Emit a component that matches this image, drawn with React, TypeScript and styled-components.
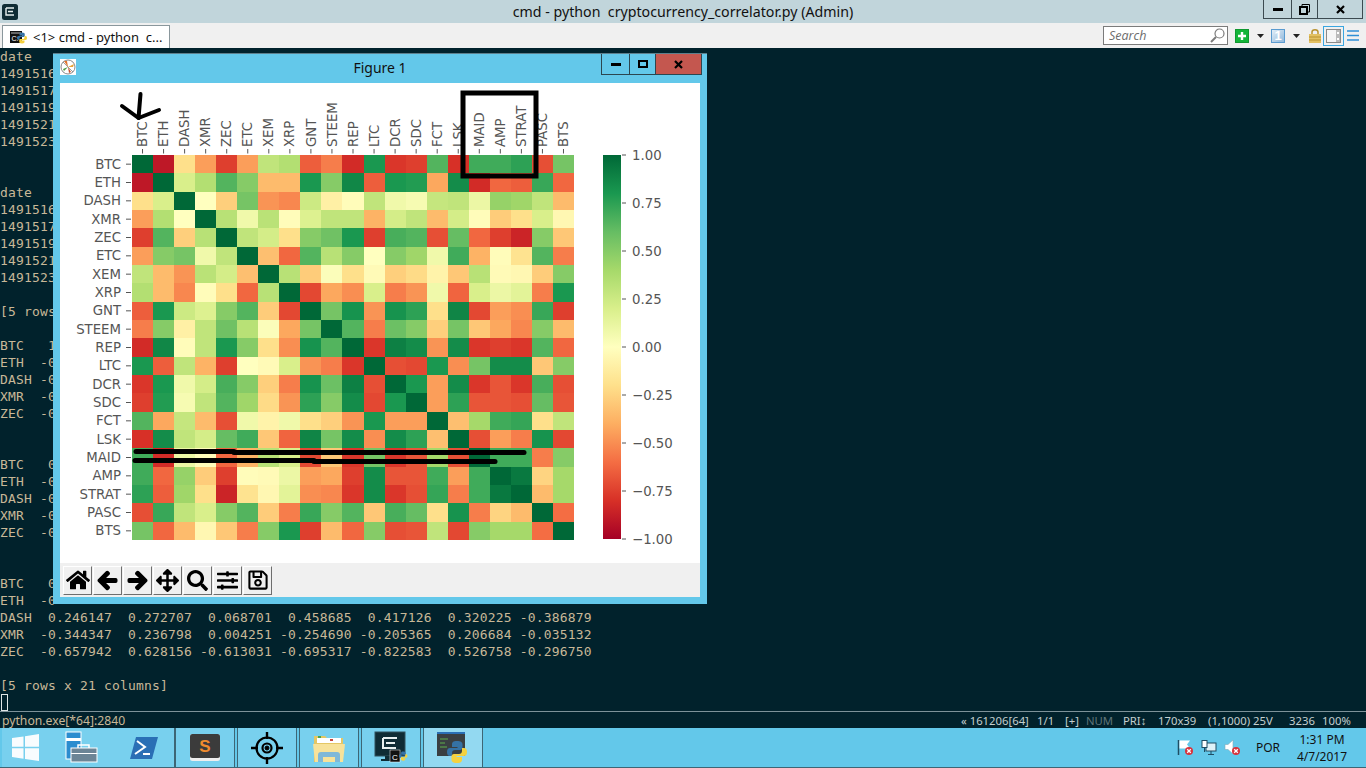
import { ReactElement } from "react";
import styled, { createGlobalStyle } from "styled-components";
import {
  FaArrowLeft,
  FaArrowRight,
  FaArrowsAlt,
  FaHome,
  FaRegSave,
  FaSearch,
  FaSlidersH,
} from "react-icons/fa";

const GlobalStyle = createGlobalStyle`
  html, body {
    margin: 0;
    padding: 0;
    background: #01222c;
  }
`;

const Page = styled.div`
  display: flex;
  flex-direction: column;
  font-family: "Noto Sans", sans-serif;
  height: 768px;
  overflow: hidden;
  position: relative;
  width: 1366px;
`;

const TitleBar = styled.div`
  align-items: flex-start;
  background: #c1d5db;
  display: grid;
  flex: none;
  grid-template-columns: 1fr auto 1fr;
  height: 23px;
`;

const AppIconSlot = styled.div`
  padding: 3px 0 0 2px;
`;

const TitleText = styled.div`
  color: #111;
  font-size: 14.2px;
  line-height: 23px;
  white-space: pre;
`;

const TitleButtons = styled.div`
  display: flex;
  justify-content: flex-end;
  padding-right: 3px;
`;

const TitleButton = styled.div<{ $w: number }>`
  align-items: center;
  border-bottom: 1px solid #3c4a50;
  border-left: 1px solid #3c4a50;
  box-sizing: border-box;
  display: flex;
  height: 19px;
  justify-content: center;
  width: ${p => p.$w}px;

  &:last-child {
    border-right: 1px solid #3c4a50;
  }
`;

const TabBar = styled.div`
  align-items: flex-end;
  background: #f0f0f0;
  display: flex;
  flex: none;
  height: 25px;
  justify-content: space-between;
  padding: 0 4px 0 2px;
  box-sizing: border-box;
`;

const Tab = styled.div`
  align-items: center;
  background: #fff;
  border: 1px solid #8a979c;
  border-bottom: none;
  box-sizing: border-box;
  color: #111;
  display: flex;
  font-size: 13px;
  gap: 6px;
  height: 23px;
  padding-left: 7px;
  white-space: pre;
  width: 168px;
`;

const Tools = styled.div`
  align-items: center;
  align-self: stretch;
  display: flex;
`;

const SearchBox = styled.div`
  align-items: center;
  background: #fff;
  border: 1px solid #7b7b7b;
  box-sizing: border-box;
  color: #6c6c6c;
  display: flex;
  font-family: "Open Sans", sans-serif;
  font-size: 12.5px;
  font-style: italic;
  height: 19px;
  justify-content: space-between;
  margin-right: 6px;
  padding: 0 2px 0 5px;
  width: 125px;
`;

const ToolSlot = styled.div<{ $w: number; $active?: boolean }>`
  align-items: center;
  border: ${p => (p.$active ? "1px solid #3aa6e0" : "none")};
  box-sizing: border-box;
  display: flex;
  height: ${p => (p.$active ? "20px" : "18px")};
  justify-content: center;
  width: ${p => p.$w}px;
`;

const NumberTile = styled.div`
  align-items: center;
  background: linear-gradient(135deg, #e2eef7, #8fb8dc);
  border: 1px solid #5a9bd0;
  box-sizing: border-box;
  color: #fff;
  display: flex;
  font-family: "Liberation Sans", sans-serif;
  font-size: 13px;
  font-weight: 700;
  height: 14px;
  justify-content: center;
  width: 14px;
`;

const Terminal = styled.div`
  background: #01222c;
  color: #c8b898;
  flex: none;
  font-family: "DejaVu Sans Mono", monospace;
  font-size: 13px;
  height: 663px;
  letter-spacing: 0.17px;
  line-height: 17px;
`;

const TerminalRow = styled.div`
  height: 17px;
  white-space: pre;
`;

const Cursor = styled.span`
  border: 1px solid #dfe6e6;
  box-sizing: border-box;
  display: inline-block;
  height: 17px;
  margin-left: 1px;
  width: 7px;
`;

const StatusBar = styled.div`
  align-items: center;
  background: #01222c;
  border-top: 1px solid #7d9299;
  box-sizing: border-box;
  color: #c8b898;
  display: flex;
  flex: none;
  font-size: 12.2px;
  height: 17px;
  justify-content: space-between;
  padding: 0 1px 0 2px;
`;

const StatusRight = styled.div`
  display: flex;
`;

const StatusItem = styled.span<{ $w: number; $dim?: boolean }>`
  color: ${p => (p.$dim ? "#5f7478" : "#c3cfcf")};
  font-size: 11.3px;
  white-space: nowrap;
  width: ${p => p.$w}px;
`;

const Taskbar = styled.div`
  align-items: stretch;
  background: #63c8ea;
  border-bottom: 1px solid #3d6675;
  box-sizing: border-box;
  display: flex;
  flex: none;
  height: 40px;
  padding-left: 2px;
`;

const QuickLaunch = styled.div`
  align-items: center;
  background: #78d0ee;
  border-right: 1px solid #3d6675;
  display: flex;
  width: 172px;
`;

const TaskSlot = styled.div<{ $w: number }>`
  align-items: center;
  display: flex;
  flex: none;
  justify-content: center;
  width: ${p => p.$w}px;
`;

const TaskButton = styled.div<{ $active?: boolean }>`
  align-items: center;
  background: ${p => (p.$active ? "#93d9f1" : "#78d0ee")};
  border-left: 1px solid #3d6675;
  border-right: 1px solid #3d6675;
  box-sizing: border-box;
  display: flex;
  justify-content: center;
  margin-right: 2px;
  width: 60px;
`;

const Tray = styled.div`
  align-items: center;
  display: flex;
  flex: 1;
  justify-content: flex-end;
  padding-right: 10px;
`;

const TrayIcon = styled.div`
  display: flex;
  margin-right: 7px;
`;

const TrayLang = styled.div`
  color: #111;
  font-size: 12px;
  margin: 0 8px 0 8px;
`;

const Clock = styled.div`
  color: #111;
  font-size: 12px;
  line-height: 17px;
  text-align: center;
  width: 68px;
`;

const FigureWindow = styled.div`
  background: #63c8ea;
  border-top: 1px solid #5e7f8c;
  box-sizing: border-box;
  display: flex;
  flex-direction: column;
  height: 551px;
  left: 53px;
  padding: 0 7px 7px;
  position: absolute;
  top: 53px;
  width: 654px;
`;

const WindowHeader = styled.div`
  display: grid;
  flex: none;
  grid-template-columns: 1fr auto 1fr;
  height: 29px;
`;

const WindowIconSlot = styled.div`
  padding-top: 4px;
`;

const WindowTitle = styled.div`
  color: #111;
  font-size: 14px;
  line-height: 27px;
`;

const WindowButtons = styled.div`
  display: flex;
  justify-content: flex-end;
  margin-right: -2px;
`;

const WindowButton = styled.div<{ $w: number; $close?: boolean }>`
  align-items: center;
  background: ${p => (p.$close ? "#c4574f" : "transparent")};
  border: 1px solid #2c4650;
  border-top: none;
  box-sizing: border-box;
  display: flex;
  height: 21px;
  justify-content: center;
  margin-left: -1px;
  width: ${p => p.$w}px;
`;

const FigureCanvas = styled.div`
  background: #fff;
  flex: none;
  height: 480px;
  line-height: 0;
`;

const FigureToolbar = styled.div`
  align-items: center;
  background: #f0f0f0;
  display: flex;
  flex: 1;
  gap: 1px;
  padding-left: 3px;
`;

const ToolbarButton = styled.div<{ $heavy?: boolean }>`
  align-items: center;
  background: #f0f0f0;
  border-bottom: 1px solid #6e6e6e;
  border-left: 1px solid #fff;
  border-right: 1px solid #6e6e6e;
  border-top: 1px solid #fff;
  box-sizing: border-box;
  color: #000;
  display: flex;
  height: 29px;
  justify-content: center;
  width: 29px;

  svg {
    stroke-width: ${p => (p.$heavy ? "40px" : "0")};
  }
`;

const labels = [
  "BTC", "ETH", "DASH", "XMR", "ZEC", "ETC", "XEM", "XRP", "GNT", "STEEM", "REP",
  "LTC", "DCR", "SDC", "FCT", "LSK", "MAID", "AMP", "STRAT", "PASC", "BTS",
];

const matrix = [
  [1, -0.9, -0.2, -0.45, -0.75, -0.45, 0.3, 0.35, -0.65, -0.55, -0.82, 0.8, -0.78, -0.75, 0.65, -0.8, 0.7, 0.7, 0.75, -0.7, 0.55],
  [-0.9, 1, 0.2, 0.35, 0.65, 0.5, -0.35, -0.35, 0.8, 0.5, 0.87, -0.65, 0.8, 0.78, -0.42, 0.85, -0.82, -0.62, -0.65, 0.72, -0.62],
  [-0.2, 0.2, 1, 0, -0.27, 0.55, -0.48, -0.52, 0.25, -0.1, -0.02, 0.3, 0.08, 0.05, 0.28, 0.3, 0.1, 0.45, 0.42, 0.3, -0.35],
  [-0.45, 0.35, 0, 1, 0.33, 0.08, 0.32, -0.02, 0.18, 0.3, 0.3, -0.38, 0.22, 0.3, -0.35, 0.22, -0.02, -0.28, -0.2, 0.2, -0.05],
  [-0.75, 0.65, -0.27, 0.33, 1, 0.3, 0.22, -0.2, 0.5, 0.57, 0.8, -0.75, 0.68, 0.65, -0.7, 0.6, -0.62, -0.75, -0.85, 0.5, -0.3],
  [-0.45, 0.5, 0.55, 0.08, 0.3, 1, -0.33, -0.62, 0.65, 0.33, 0.5, 0, 0.5, 0.42, 0.08, 0.7, -0.38, -0.02, -0.18, 0.65, -0.55],
  [0.3, -0.35, -0.48, 0.32, 0.22, -0.33, 1, 0.33, -0.28, 0.02, -0.2, -0.03, -0.27, -0.22, -0.08, -0.3, 0.33, -0.03, -0.05, -0.28, 0.5],
  [0.35, -0.35, -0.52, -0.02, -0.2, -0.62, 0.33, 1, -0.72, -0.42, -0.5, 0.2, -0.55, -0.48, 0.08, -0.63, 0.2, 0.1, 0.15, -0.55, 0.8],
  [-0.65, 0.8, 0.25, 0.18, 0.5, 0.65, -0.28, -0.72, 1, 0.55, 0.82, -0.48, 0.82, 0.75, -0.2, 0.88, -0.72, -0.45, -0.5, 0.72, -0.75],
  [-0.55, 0.5, -0.1, 0.3, 0.57, 0.33, 0.02, -0.42, 0.55, 1, 0.65, -0.55, 0.58, 0.5, -0.27, 0.55, -0.3, -0.42, -0.52, 0.5, -0.35],
  [-0.82, 0.87, -0.02, 0.3, 0.8, 0.5, -0.2, -0.5, 0.82, 0.65, 1, -0.78, 0.9, 0.85, -0.48, 0.85, -0.78, -0.75, -0.78, 0.65, -0.62],
  [0.8, -0.65, 0.3, -0.38, -0.75, 0, -0.03, 0.2, -0.48, -0.55, -0.78, 1, -0.7, -0.72, 0.8, -0.5, 0.55, 0.85, 0.85, -0.3, 0.5],
  [-0.78, 0.8, 0.08, 0.22, 0.68, 0.5, -0.27, -0.55, 0.82, 0.58, 0.9, -0.7, 1, 0.8, -0.45, 0.85, -0.78, -0.68, -0.78, 0.68, -0.7],
  [-0.75, 0.78, 0.05, 0.3, 0.65, 0.42, -0.22, -0.48, 0.75, 0.5, 0.85, -0.72, 0.8, 1, -0.45, 0.75, -0.68, -0.68, -0.7, 0.6, -0.68],
  [0.65, -0.42, 0.28, -0.35, -0.7, 0.08, -0.08, 0.08, -0.2, -0.27, -0.48, 0.8, -0.45, -0.45, 1, -0.33, 0.4, 0.7, 0.73, -0.2, 0.3],
  [-0.8, 0.85, 0.3, 0.22, 0.6, 0.7, -0.3, -0.63, 0.88, 0.55, 0.85, -0.5, 0.85, 0.75, -0.33, 1, -0.7, -0.45, -0.55, 0.82, -0.72],
  [0.7, -0.82, 0.1, -0.02, -0.62, -0.38, 0.33, 0.2, -0.72, -0.3, -0.78, 0.55, -0.78, -0.68, 0.4, -0.7, 1, 0.7, 0.7, -0.55, 0.5],
  [0.7, -0.62, 0.45, -0.28, -0.75, -0.02, -0.03, 0.1, -0.45, -0.42, -0.75, 0.85, -0.68, -0.68, 0.7, -0.45, 0.7, 1, 0.93, -0.25, 0.4],
  [0.75, -0.65, 0.42, -0.2, -0.85, -0.18, -0.05, 0.15, -0.5, -0.52, -0.78, 0.85, -0.78, -0.7, 0.73, -0.55, 0.7, 0.93, 1, -0.35, 0.4],
  [-0.7, 0.72, 0.3, 0.2, 0.5, 0.65, -0.28, -0.55, 0.72, 0.5, 0.65, -0.3, 0.68, 0.6, -0.2, 0.82, -0.55, -0.25, -0.35, 1, -0.6],
  [0.55, -0.62, -0.35, -0.05, -0.3, -0.55, 0.5, 0.8, -0.75, -0.35, -0.62, 0.5, -0.7, -0.68, 0.3, -0.72, 0.5, 0.4, 0.4, -0.6, 1],
];

const cmapStops = [
  [165, 0, 38], [215, 48, 39], [244, 109, 67], [253, 174, 97], [254, 224, 139], [255, 255, 191],
  [217, 239, 139], [166, 217, 106], [102, 189, 99], [26, 152, 80], [0, 104, 55],
];

// RdYlGn, same thing seaborn draws with
function cmap(v: number): string {
  const t = ((v + 1) / 2) * 10;
  const i = Math.min(9, Math.floor(t));
  const f = t - i;
  const c = cmapStops[i].map((a, k) => Math.round(a + (cmapStops[i + 1][k] - a) * f));
  return `rgb(${c[0]},${c[1]},${c[2]})`;
}

const terminalRows = [
  "date", "1491516", "1491517", "1491519", "1491521", "1491523", "", "",
  "date", "1491516", "1491517", "1491519", "1491521", "1491523", "",
  "[5 rows", "",
  "BTC   1", "ETH  -0", "DASH -0", "XMR  -0", "ZEC  -0", "", "",
  "BTC   0", "ETH  -0", "DASH -0", "XMR  -0", "ZEC  -0", "", "",
  "BTC   0", "ETH  -0",
  "DASH  0.246147  0.272707  0.068701  0.458685  0.417126  0.320225 -0.386879",
  "XMR  -0.344347  0.236798  0.004251 -0.254690 -0.205365  0.206684 -0.035132",
  "ZEC  -0.657942  0.628156 -0.613031 -0.695317 -0.822583  0.526758 -0.296750",
  "",
  "[5 rows x 21 columns]",
];

const statusItems: { text: string; w: number; dim?: boolean }[] = [
  { text: "« 161206[64]", w: 76 },
  { text: "1/1", w: 28 },
  { text: "[+]", w: 21 },
  { text: "NUM", w: 37, dim: true },
  { text: "PRI↕", w: 35 },
  { text: "170x39", w: 50 },
  { text: "(1,1000) 25V", w: 81 },
  { text: "3236", w: 33 },
  { text: "100%", w: 43 },
];

// chart geometry, in canvas pixels (640x480 matplotlib figure)
const HEAT_X = 72;
const HEAT_Y = 72;
const CELL_W = 442 / 21;
const CELL_H = 385 / 21;
const BAR_Y = 72;
const BAR_H = 384;

const colorTicks = ["1.00", "0.75", "0.50", "0.25", "0.00", "−0.25", "−0.50", "−0.75", "−1.00"];

function HeatmapChart(): ReactElement {
  return (
    <svg width="640" height="480" viewBox="0 0 640 480" fontFamily="'DejaVu Sans', sans-serif" fontSize="13.3" fill="#555">
      <defs>
        <linearGradient id="bar" x1="0" y1="1" x2="0" y2="0">
          {cmapStops.map((c, i) => (
            <stop key={i} offset={i / 10} stopColor={`rgb(${c[0]},${c[1]},${c[2]})`} />
          ))}
        </linearGradient>
      </defs>

      <g shapeRendering="crispEdges">
        {matrix.map((row, r) =>
          row.map((v, c) => (
            <rect
              key={`${r}-${c}`}
              x={Math.round(HEAT_X + c * CELL_W)}
              y={Math.round(HEAT_Y + r * CELL_H)}
              width={Math.round(HEAT_X + (c + 1) * CELL_W) - Math.round(HEAT_X + c * CELL_W)}
              height={Math.round(HEAT_Y + (r + 1) * CELL_H) - Math.round(HEAT_Y + r * CELL_H)}
              fill={cmap(v)}
            />
          )),
        )}
      </g>

      {labels.map((l, i) => {
        const x = HEAT_X + (i + 0.5) * CELL_W;
        const y = HEAT_Y + (i + 0.5) * CELL_H;
        return (
          <g key={l}>
            <line x1={x} x2={x} y1={66} y2={70.5} stroke="#555" />
            <text transform={`translate(${x + 4.6} 64) rotate(-90)`}>{l}</text>
            <line x1={66} x2={71} y1={y} y2={y} stroke="#555" />
            <text x={61} y={y + 4.6} textAnchor="end">{l}</text>
          </g>
        );
      })}

      <rect x={543} y={BAR_Y} width={18} height={BAR_H} fill="url(#bar)" />
      {colorTicks.map((t, i) => {
        const y = BAR_Y + (i * BAR_H) / 8;
        return (
          <g key={t}>
            <line x1={562} x2={566} y1={y} y2={y} stroke="#555" />
            <text x={572} y={y + 4.6}>{t}</text>
          </g>
        );
      })}

      {/* hand drawn marks on top of the plot */}
      <g fill="none" stroke="#000" strokeLinecap="round" strokeLinejoin="round">
        <g strokeWidth="4">
          <path d="M80.5 11 L78.5 35" />
          <path d="M62 23 L78.5 35 L99 27" />
        </g>
        <g strokeWidth="5">
          <path d="M76 368.500 H174" />
          <path d="M174 369.500 H464" />
          <path d="M75 377.500 H254" />
          <path d="M254 378.500 H435" />
        </g>
      </g>
      <rect x={403} y={10} width={73} height={83} fill="none" stroke="#000" strokeWidth="5" />
    </svg>
  );
}

function EmuIcon({ size }: { size: number }): ReactElement {
  return (
    <svg width={size} height={size} viewBox="0 0 16 16">
      <rect x="0" y="0" width="16" height="16" rx="2.500" fill="#0f2c35" />
      <path d="M4 4 H12 M4 4 V11 H12 M6 7.500 H11" stroke="#e8f0f0" strokeWidth="1.400" fill="none" />
    </svg>
  );
}

function PythonMark({ x, y, s }: { x: number; y: number; s: number }): ReactElement {
  return (
    <g transform={`translate(${x} ${y}) scale(${s})`}>
      <path d="M10 1 C6 1 5 2.500 5 4.500 V7 H10.500 V8 H3 C1 8 0 9.500 0 12 C0 14.500 1 16 3 16 H5 V13 C5 11.300 6.300 10 8 10 H13 C14.500 10 15.500 9 15.500 7.500 V4.500 C15.500 2.500 14 1 10 1 Z" fill="#3572a5" />
      <path d="M10 23 C14 23 15 21.500 15 19.500 V17 H9.500 V16 H17 C19 16 20 14.500 20 12 C20 9.500 19 8 17 8 H15 V11 C15 12.700 13.700 14 12 14 H7 C5.500 14 4.500 15 4.500 16.500 V19.500 C4.500 21.500 6 23 10 23 Z" fill="#f5d13f" />
    </g>
  );
}

function TabConsoleIcon(): ReactElement {
  return (
    <svg width="17" height="16" viewBox="0 0 17 16">
      <rect x="0" y="2" width="12" height="12" fill="#111" />
      <rect x="1" y="3" width="10" height="2" fill="#666" />
      <text x="1.500" y="12" fontSize="7" fill="#fff" fontFamily="'Liberation Sans', sans-serif">C:</text>
      <PythonMark x={7} y={3} s={0.5} />
    </svg>
  );
}

function FigureIcon(): ReactElement {
  return (
    <svg width="16" height="16" viewBox="0 0 16 16">
      <rect width="16" height="16" fill="#fff" />
      <circle cx="8" cy="8" r="7" fill="none" stroke="#888" />
      <path d="M8 8 L4 2 L7 2 Z" fill="#e2732a" />
      <path d="M8 8 L14 5 L13 8 Z" fill="#e8a33a" />
      <path d="M8 8 L3 10 L4 12 Z" fill="#4c9a3f" />
      <path d="M8 8 L11 13 L9 14 Z" fill="#c9502a" />
      <path d="M3 3 L13 13" stroke="#777" strokeWidth="0.700" />
    </svg>
  );
}

function WindowsLogo(): ReactElement {
  return (
    <svg width="27" height="27" viewBox="0 0 27 27" fill="#fff" opacity="0.95">
      <path d="M0 4 L11.500 2.400 V12.800 H0 Z" />
      <path d="M13 2.200 L27 0 V12.800 H13 Z" />
      <path d="M0 14.200 H11.500 V24.800 L0 23 Z" />
      <path d="M13 14.200 H27 V27 L13 25 Z" />
    </svg>
  );
}

function ServerManagerIcon(): ReactElement {
  return (
    <svg width="33" height="33" viewBox="0 0 33 33">
      <rect x="1" y="1" width="15" height="27" fill="#2a8ccf" stroke="#fff" />
      <rect x="1" y="7" width="15" height="3" fill="#fff" />
      <rect x="6" y="17" width="26" height="14" fill="#6c8596" stroke="#fff" />
      <path d="M13 17 V14 H24 V17" fill="none" stroke="#fff" strokeWidth="1.500" />
      <rect x="6" y="22" width="26" height="1" fill="#fff" />
    </svg>
  );
}

function PowerShellIcon(): ReactElement {
  return (
    <svg width="28" height="24" viewBox="0 0 28 24">
      <path d="M6 1 H28 L22 23 H0 Z" fill="#2a6fb5" />
      <path d="M7 5 L15 11 L5 18 M13 18 H20" fill="none" stroke="#fff" strokeWidth="2" />
    </svg>
  );
}

function SublimeIcon(): ReactElement {
  return (
    <svg width="32" height="29" viewBox="0 0 32 29">
      <rect x="1" y="1" width="30" height="27" rx="2.500" fill="#eee" />
      <rect x="1" y="1" width="30" height="24" rx="2.500" fill="#3b3b3b" />
      <text x="16" y="19" textAnchor="middle" fontSize="17" fontWeight="700" fill="#f08b2e" fontFamily="'Liberation Sans', sans-serif">S</text>
    </svg>
  );
}

function TargetIcon(): ReactElement {
  return (
    <svg width="32" height="32" viewBox="0 0 32 32" fill="none" stroke="#000">
      <circle cx="16" cy="16" r="10.500" strokeWidth="2.200" />
      <circle cx="16" cy="16" r="4.500" strokeWidth="2.200" />
      <circle cx="16" cy="16" r="2" fill="#000" />
      <path d="M16 0 V7 M16 25 V32 M0 16 H7 M25 16 H32" strokeWidth="2.400" />
    </svg>
  );
}

function FolderIcon(): ReactElement {
  return (
    <svg width="32" height="30" viewBox="0 0 32 30">
      <path d="M1 3 H12 L14 5 H30 V29 H1 Z" fill="#e4c765" />
      <rect x="4" y="5" width="24" height="5" fill="#fff" />
      <rect x="5" y="3" width="3" height="2" fill="#4aa34a" />
      <rect x="17" y="6" width="3" height="2" fill="#c9463a" />
      <path d="M0 11 H32 L30 29 H2 Z" fill="#f7e29a" />
      <path d="M5 29 V22 C5 20 6 19 8 19 H24 C26 19 27 20 27 22 V29 H22 V24 H10 V29 Z" fill="#7fb8d8" />
    </svg>
  );
}

function EmuTaskIcon(): ReactElement {
  return (
    <svg width="34" height="33" viewBox="0 0 34 33">
      <rect x="1" y="1" width="30" height="24" fill="#0f2c35" stroke="#30505c" />
      <path d="M9 7 H23 M9 7 V17 H22 M12 12 H21" stroke="#e8f0f0" strokeWidth="2" fill="none" />
      <rect x="11" y="25" width="10" height="3" fill="#0f2c35" />
      <rect x="7" y="28" width="18" height="2" fill="#0f2c35" />
      <rect x="16" y="19" width="10" height="12" fill="#111" stroke="#fff" strokeWidth="0.500" />
      <text x="18" y="29" fontSize="8" fill="#fff" fontFamily="'Liberation Sans', sans-serif">C</text>
      <PythonMark x={25} y={20} s={0.42} />
    </svg>
  );
}

function PythonTaskIcon(): ReactElement {
  return (
    <svg width="33" height="33" viewBox="0 0 33 33">
      <rect x="0" y="1" width="28" height="24" fill="#3a3f42" />
      <rect x="0" y="1" width="28" height="2" fill="#2a6fb5" />
      <path d="M3 8 H11 M3 12 H8 M3 16 H10" stroke="#5fb04a" strokeWidth="1.200" />
      <PythonMark x={10} y={9} s={1} />
    </svg>
  );
}

function RedCross({ x, y }: { x: number; y: number }): ReactElement {
  return (
    <g transform={`translate(${x} ${y})`}>
      <circle cx="4" cy="4" r="4" fill="#d8323c" />
      <path d="M2.200 2.200 L5.800 5.800 M5.800 2.200 L2.200 5.800" stroke="#fff" strokeWidth="1.300" />
    </g>
  );
}

function FlagIcon(): ReactElement {
  return (
    <svg width="17" height="17" viewBox="0 0 17 17">
      <path d="M1.500 1 V16" stroke="#1f4d63" strokeWidth="1.500" />
      <path d="M2.500 1.500 H13 L10 5.500 L13 9.500 H2.500 Z" fill="#fff" />
      <RedCross x={8} y={8} />
    </svg>
  );
}

function NetworkIcon(): ReactElement {
  return (
    <svg width="16" height="16" viewBox="0 0 16 16" fill="none">
      <rect x="5" y="3" width="10" height="8" fill="#dff2f8" stroke="#1f4d63" />
      <rect x="1" y="0.500" width="5" height="7" fill="#fff" stroke="#1f4d63" />
      <path d="M3.500 7.500 V12 M10 11 V14 M7 14.500 H13" stroke="#1f4d63" />
    </svg>
  );
}

function SpeakerIcon(): ReactElement {
  return (
    <svg width="17" height="17" viewBox="0 0 17 17">
      <path d="M1 5.500 H4 L9 1 V15 L4 10.500 H1 Z" fill="#fff" stroke="#7fa9b8" strokeWidth="0.600" />
      <RedCross x={8} y={8} />
    </svg>
  );
}

function SmallSearch(): ReactElement {
  return (
    <svg width="15" height="15" viewBox="0 0 15 15" fill="none" stroke="#7b7b7b">
      <circle cx="9.500" cy="5.500" r="4.500" strokeWidth="1.200" />
      <path d="M6 9 L1 14" strokeWidth="2" />
    </svg>
  );
}

function GreenPlus(): ReactElement {
  return (
    <svg width="14" height="14" viewBox="0 0 14 14">
      <rect width="14" height="14" rx="1" fill="#14b53a" stroke="#0b7f26" />
      <path d="M7 3 V11 M3 7 H11" stroke="#fff" strokeWidth="2.400" />
    </svg>
  );
}

function CaretDown(): ReactElement {
  return (
    <svg width="7" height="4" viewBox="0 0 7 4">
      <path d="M0 0 H7 L3.500 4 Z" fill="#222" />
    </svg>
  );
}

function LockIcon(): ReactElement {
  return (
    <svg width="12" height="15" viewBox="0 0 12 15">
      <path d="M3 7 V4 C3 1 9 1 9 4 V7" fill="none" stroke="#b9922f" strokeWidth="1.500" />
      <rect y="6" width="12" height="9" fill="#e3c163" />
      <path d="M0 9 H12 M0 12 H12" stroke="#b9922f" />
    </svg>
  );
}

function SidebarIcon(): ReactElement {
  return (
    <svg width="15" height="14" viewBox="0 0 15 14">
      <rect x="0.500" y="0.500" width="14" height="13" fill="#f6f6f6" stroke="#8a8a8a" />
      <rect x="10" y="1" width="4" height="12" fill="#bbb" />
      <rect x="11" y="3" width="2" height="2" fill="#fff" />
      <rect x="11" y="9" width="2" height="2" fill="#fff" />
    </svg>
  );
}

function HamburgerIcon(): ReactElement {
  return (
    <svg width="12" height="11" viewBox="0 0 12 11">
      <path d="M0 1 H12 M0 5.500 H12 M0 10 H12" stroke="#2f8fd6" strokeWidth="1.300" />
    </svg>
  );
}

function App(): ReactElement {
  return (
    <Page>
      <GlobalStyle />

      <TitleBar>
        <AppIconSlot>
          <EmuIcon size={16} />
        </AppIconSlot>
        <TitleText>{"cmd - python  cryptocurrency_correlator.py (Admin)"}</TitleText>
        <TitleButtons>
          <TitleButton $w={28}>
            <svg width="10" height="3"><rect width="10" height="3" fill="#000" /></svg>
          </TitleButton>
          <TitleButton $w={26}>
            <svg width="11" height="11" viewBox="0 0 11 11" fill="none" stroke="#000">
              <path d="M3 2.500 V0.500 H10.500 V8 H8" />
              <rect x="1" y="3" width="7" height="7" strokeWidth="2" />
            </svg>
          </TitleButton>
          <TitleButton $w={46}>
            <svg width="9" height="9" viewBox="0 0 9 9">
              <path d="M1 1 L8 8 M8 1 L1 8" stroke="#000" strokeWidth="2.200" />
            </svg>
          </TitleButton>
        </TitleButtons>
      </TitleBar>

      <TabBar>
        <Tab>
          <TabConsoleIcon />
          {"<1> cmd - python  c..."}
        </Tab>
        <Tools>
          <SearchBox>
            Search
            <SmallSearch />
          </SearchBox>
          <ToolSlot $w={16}><GreenPlus /></ToolSlot>
          <ToolSlot $w={20}><CaretDown /></ToolSlot>
          <ToolSlot $w={16}><NumberTile>1</NumberTile></ToolSlot>
          <ToolSlot $w={20}><CaretDown /></ToolSlot>
          <ToolSlot $w={17}><LockIcon /></ToolSlot>
          <ToolSlot $w={21} $active><SidebarIcon /></ToolSlot>
          <ToolSlot $w={18}><HamburgerIcon /></ToolSlot>
        </Tools>
      </TabBar>

      <Terminal>
        {terminalRows.map((row, i) => (
          <TerminalRow key={i}>{row}</TerminalRow>
        ))}
        <TerminalRow><Cursor /></TerminalRow>
      </Terminal>

      <StatusBar>
        <span>python.exe[*64]:2840</span>
        <StatusRight>
          {statusItems.map(item => (
            <StatusItem key={item.text} $w={item.w} $dim={item.dim}>{item.text}</StatusItem>
          ))}
        </StatusRight>
      </StatusBar>

      <Taskbar>
        <QuickLaunch>
          <TaskSlot $w={46}><WindowsLogo /></TaskSlot>
          <TaskSlot $w={66}><ServerManagerIcon /></TaskSlot>
          <TaskSlot $w={60}><PowerShellIcon /></TaskSlot>
        </QuickLaunch>
        <TaskButton><SublimeIcon /></TaskButton>
        <TaskButton><TargetIcon /></TaskButton>
        <TaskButton><FolderIcon /></TaskButton>
        <TaskButton><EmuTaskIcon /></TaskButton>
        <TaskButton $active><PythonTaskIcon /></TaskButton>
        <Tray>
          <TrayIcon><FlagIcon /></TrayIcon>
          <TrayIcon><NetworkIcon /></TrayIcon>
          <TrayIcon><SpeakerIcon /></TrayIcon>
          <TrayLang>POR</TrayLang>
          <Clock>
            1:31 PM
            <br />
            4/7/2017
          </Clock>
        </Tray>
      </Taskbar>

      <FigureWindow>
        <WindowHeader>
          <WindowIconSlot>
            <FigureIcon />
          </WindowIconSlot>
          <WindowTitle>Figure 1</WindowTitle>
          <WindowButtons>
            <WindowButton $w={29}>
              <svg width="10" height="3"><rect width="10" height="3" fill="#000" /></svg>
            </WindowButton>
            <WindowButton $w={27}>
              <svg width="10" height="8" viewBox="0 0 10 8">
                <rect x="1" y="1" width="8" height="6" fill="none" stroke="#000" strokeWidth="2" />
              </svg>
            </WindowButton>
            <WindowButton $w={47} $close>
              <svg width="9" height="9" viewBox="0 0 9 9">
                <path d="M1 1 L8 8 M8 1 L1 8" stroke="#000" strokeWidth="2.200" />
              </svg>
            </WindowButton>
          </WindowButtons>
        </WindowHeader>
        <FigureCanvas>
          <HeatmapChart />
        </FigureCanvas>
        <FigureToolbar>
          <ToolbarButton><FaHome size={24} /></ToolbarButton>
          <ToolbarButton $heavy><FaArrowLeft size={21} /></ToolbarButton>
          <ToolbarButton $heavy><FaArrowRight size={21} /></ToolbarButton>
          <ToolbarButton><FaArrowsAlt size={23} /></ToolbarButton>
          <ToolbarButton><FaSearch size={21} /></ToolbarButton>
          <ToolbarButton><FaSlidersH size={21} /></ToolbarButton>
          <ToolbarButton><FaRegSave size={22} /></ToolbarButton>
        </FigureToolbar>
      </FigureWindow>
    </Page>
  );
}

export default App;
